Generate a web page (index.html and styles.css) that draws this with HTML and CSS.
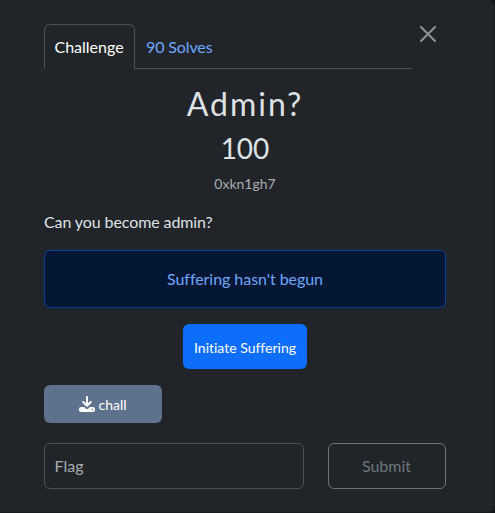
FILE: index.html
```html
<!DOCTYPE html>
<html lang="en">
<head>
<meta charset="utf-8">
<title>Admin?</title>
<link rel="stylesheet" href="styles.css">
</head>
<body>
<main class="modal">
  <header class="top">
    <nav class="tabs">
      <a class="tab active">Challenge</a>
      <a class="tab">90 Solves</a>
    </nav>
    <button class="close" aria-label="Close">
      <svg viewBox="0 0 16 16" width="16" height="16"><path d="M1 1L15 15M15 1L1 15" fill="none" stroke="currentColor" stroke-width="2" stroke-linecap="round"/></svg>
    </button>
  </header>
  <h2 class="name">Admin?</h2>
  <h3 class="value">100</h3>
  <p class="author">0xkn1gh7</p>
  <p class="desc">Can you become admin?</p>
  <div class="alert">Suffering hasn't begun</div>
  <button class="start">Initiate Suffering</button>
  <a class="file">
    <svg viewBox="0 0 16 16" width="16" height="16"><path d="M8 1V9.2M4.2 6L8 9.8L11.8 6" fill="none" stroke="currentColor" stroke-width="2" stroke-linecap="round" stroke-linejoin="round"/><path fill="currentColor" fill-rule="evenodd" d="M2 11H5.1L6.6 12.4Q8 13.5 9.4 12.4L10.9 11H14Q16 11 16 13V14Q16 16 14 16H2Q0 16 0 14V13Q0 11 2 11ZM13.5 12.7a.8.8 0 1 0 0 1.6a.8.8 0 1 0 0-1.6Z"/></svg>
    <span>chall</span>
  </a>
  <form class="answer">
    <input class="flag" placeholder="Flag">
    <button class="submit" type="button">Submit</button>
  </form>
</main>
</body>
</html>
```
FILE: styles.css
```css
* { box-sizing: border-box; }
body {
  margin: 0;
  background: #111417;
  color: #dee2e6;
  font: 16px/24px Lato, sans-serif;
  font-variant-ligatures: none;
}
.modal {
  width: 495px;
  height: 513px;
  padding: 24px 48px 0 44px;
  border: 1px solid #191c1f;
  border-width: 0 1px 1px 0;
  border-radius: 0 7px 7px 0;
  background: #212529;
  display: flex;
  flex-direction: column;
}
.top { display: flex; height: 45px; }
.tabs {
  display: flex;
  width: 367px;
  border-bottom: 1px solid #495057;
}
.tab {
  height: 45px;
  padding: 10px 10px 0;
  border: 1px solid transparent;
  border-bottom: 0;
  border-radius: 6px 6px 0 0;
  color: #6ea8fe;
  letter-spacing: -0.12px;
}
.active {
  width: 91px;
  padding-left: 9.5px;
  border-color: #495057;
  background: #212529;
  color: #fff;
  letter-spacing: 0;
}
.close {
  display: flex;
  margin: 2px 0 0 9px;
  padding: 0;
  border: 0;
  background: none;
  color: #909294;
}
h2, h3, p { margin: 0; font-weight: 400; }
.name {
  margin-top: 16px;
  font-size: 32px;
  line-height: 38px;
  letter-spacing: 2px;
  text-align: center;
}
.value {
  margin-top: 8px;
  font-size: 28px;
  line-height: 34px;
  text-align: center;
}
.author {
  margin-top: 8px;
  color: #a7acb1;
  font-size: 14px;
  line-height: 21px;
  text-align: center;
}
.desc { margin-top: 16px; letter-spacing: -0.1px; }
.alert {
  height: 58px;
  margin-top: 16px;
  padding: 16px;
  border: 1px solid #084298;
  border-radius: 6px;
  background: #031633;
  color: #6ea8fe;
  letter-spacing: -0.05px;
  text-align: center;
}
.start {
  align-self: center;
  width: 124px;
  height: 45px;
  margin-top: 16px;
  padding: 2px 0 0;
  border: 0;
  border-radius: 6px;
  background: #0d6efd;
  color: #fff;
  font: 14px/21px Lato, sans-serif;
  font-variant-ligatures: none;
}
.file {
  display: flex;
  align-items: center;
  justify-content: center;
  gap: 3px;
  width: 118px;
  height: 38px;
  margin-top: 16px;
  border-radius: 6px;
  background: #5e728e;
  color: #fff;
  font-size: 14px;
}
.file span { padding-top: 2px; }
.answer {
  display: flex;
  gap: 24px;
  margin-top: 20px;
}
.flag, .submit {
  height: 46px;
  border: 1px solid #495057;
  border-radius: 6px;
  background: #212529;
  font: 16px/24px Lato, sans-serif;
}
.flag { width: 260px; padding: 0 9.5px 2px; }
.flag::placeholder { color: #a7acb1; opacity: 1; }
.submit {
  width: 118px;
  padding: 0 1px 1px 0;
  border-color: #6c757d;
  color: #6c757d;
}
```
